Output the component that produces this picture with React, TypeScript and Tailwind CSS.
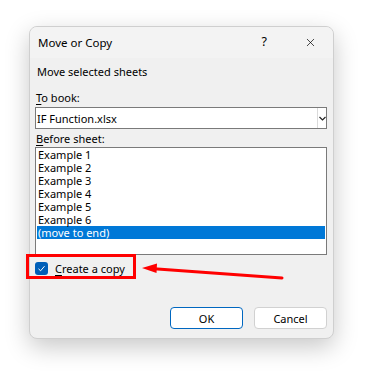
import { X } from 'lucide-react'

const sheets = ['Example 1', 'Example 2', 'Example 3', 'Example 4', 'Example 5', 'Example 6', '(move to end)']

export default function App() {
  return (
    <div className="relative w-[377px] h-[382px] bg-white pt-[26px] pl-[29px] font-['Noto_Sans',sans-serif] text-[11px] text-black">
      <div className="w-[305px] h-[313px] rounded-[8px] border border-[#cfcfcf] bg-[#f0f0f0] shadow-[0_8px_24px_rgba(0,0,0,0.22)] flex flex-col overflow-hidden">
        {/* title bar */}
        <div className="h-[31px] bg-[#f3f3f3] flex items-center pl-[8px] pr-[16px]">
          <span className="text-[11.5px] leading-none">Move or Copy</span>
          <span className="ml-auto mr-[37px] text-[12.5px] leading-none">?</span>
          <X className="w-[13px] h-[13px]" strokeWidth={1.3} />
        </div>

        <div className="flex flex-col px-[5px]">
          <div className="mt-[6px] pl-[2px] leading-[16px]">Move selected sheets</div>

          <div className="mt-[10px] pl-[1px] leading-[16px]">
            <span className="underline underline-offset-2">T</span>o book:
          </div>
          <div className="mt-[1px] w-[292px] h-[22px] bg-white border border-[#7a7a7a] flex items-center">
            <span className="pl-[1px] leading-none">IF Function.xlsx</span>
            <div className="ml-auto h-full w-[9px] border-l border-[#dadada] flex items-center justify-center">
              <svg width="7" height="5" viewBox="0 0 7 5">
                <path d="M0.5 1 L3.5 4 L6.5 1" fill="none" stroke="#222" strokeWidth="1.2" />
              </svg>
            </div>
          </div>

          <div className="mt-[1px] pl-[1px] leading-[17px]">
            <span className="underline underline-offset-2">B</span>efore sheet:
          </div>
          <div className="w-[292px] h-[108px] bg-white border border-[#7a7a7a] px-[1px]">
            {sheets.map((s, i) => (
              <div
                key={s}
                className={
                  'h-[13px] leading-[13px] pl-[1px] ' +
                  (i === sheets.length - 1 ? 'bg-[#0078d7] text-white' : '')
                }
              >
                {s}
              </div>
            ))}
          </div>

          <div className="mt-[7px] flex items-center h-[13px]">
            <div className="w-[13px] h-[13px] rounded-[3px] bg-[#005fb8] flex items-center justify-center">
              <svg width="9" height="9" viewBox="0 0 9 9">
                <path d="M1.5 4.8 L3.6 6.8 L7.5 2.2" fill="none" stroke="white" strokeWidth="1" />
              </svg>
            </div>
            <span className="ml-[7px] leading-none">
              <span className="underline underline-offset-2">C</span>reate a copy
            </span>
          </div>

          <div className="mt-[32px] flex justify-end gap-[11px] pr-[1px]">
            <button className="w-[73px] h-[22px] rounded-[4px] bg-white border border-[#0067c0] leading-none">OK</button>
            <button className="w-[73px] h-[22px] rounded-[4px] bg-white border border-[#d1d1d1] leading-none">Cancel</button>
          </div>
        </div>
      </div>

      {/* annotation: red box and arrow */}
      <div className="absolute left-[26px] top-[254px] w-[110px] h-[25px] border-[3px] border-[#ff0000]" />
      <svg className="absolute left-0 top-0" width="377" height="382" viewBox="0 0 377 382">
        <line x1="154" y1="268.8" x2="282" y2="278" stroke="#ff0000" strokeWidth="3" strokeLinecap="round" />
        <path d="M142 268 L157 263.5 L156.5 273 Z" fill="#ff0000" />
      </svg>
    </div>
  )
}
